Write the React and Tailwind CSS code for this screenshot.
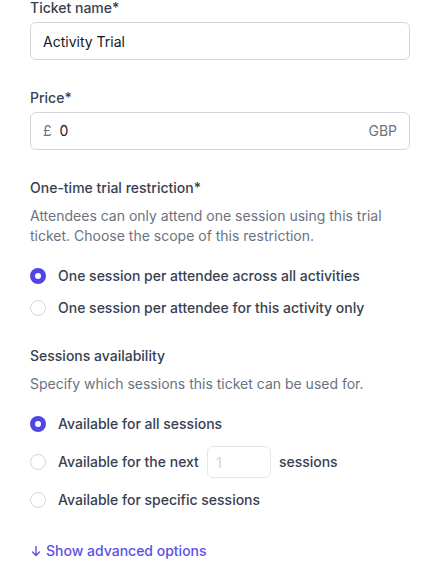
import React, { useState } from "react";

const Radio = ({ checked, onClick }) => (
  <button
    type="button"
    onClick={onClick}
    className={
      checked
        ? "flex h-4 w-4 shrink-0 items-center justify-center rounded-full bg-[#4f46e5]"
        : "flex h-4 w-4 shrink-0 items-center justify-center rounded-full border border-[#d1d5db] bg-white"
    }
  >
    {checked && <span className="h-1.5 w-1.5 rounded-full bg-white" />}
  </button>
);

const App = () => {
  const [details, setDetails] = useState({
    ticketName: "Activity Trial",
    price: "0",
    restriction: "all",
    availability: "all",
    nextSessions: "",
  });

  const handleChange = (e) => {
    setDetails({ ...details, [e.target.name]: e.target.value });
  };

  return (
    <div className="min-h-screen bg-white font-['Inter',sans-serif] text-sm text-[#374151]">
      <div className="-mt-0.5 w-[380px] pl-[30px] box-content">
        <label htmlFor="ticketName" className="block leading-5 font-medium">
          Ticket name*
        </label>
        <input
          type="text"
          name="ticketName"
          value={details.ticketName}
          onChange={handleChange}
          className="mt-1 block h-[38px] w-full rounded-md border border-[#d1d5db] px-[12px] text-sm text-[#111827] outline-none"
        />

        <label htmlFor="price" className="mt-7 block leading-5 font-medium">
          Price*
        </label>
        <div className="mt-1 flex h-[38px] w-full items-center rounded-md border border-[#d1d5db] px-[12px]">
          <span className="text-[#6b7280]">£</span>
          <input
            type="text"
            name="price"
            value={details.price}
            onChange={handleChange}
            className="ml-[8px] min-w-0 flex-1 text-sm text-[#111827] outline-none"
          />
          <span className="text-[#6b7280]">GBP</span>
        </div>

        <div className="mt-7 leading-5 font-medium">One-time trial restriction*</div>
        <p className="mt-2 leading-5 text-[#6b7280]">
          Attendees can only attend one session using this trial ticket. Choose
          the scope of this restriction.
        </p>
        <div className="mt-5 flex flex-col gap-3">
          <label className="flex h-5 items-center gap-3 font-medium">
            <Radio
              checked={details.restriction === "all"}
              onClick={() => setDetails({ ...details, restriction: "all" })}
            />
            One session per attendee across all activities
          </label>
          <label className="flex h-5 items-center gap-3 font-medium">
            <Radio
              checked={details.restriction === "this"}
              onClick={() => setDetails({ ...details, restriction: "this" })}
            />
            One session per attendee for this activity only
          </label>
        </div>

        <div className="mt-7 leading-5 font-medium">Sessions availability</div>
        <p className="mt-2 leading-5 text-[#6b7280]">
          Specify which sessions this ticket can be used for.
        </p>
        <div className="mt-5 flex flex-col gap-3">
          <label className="flex h-5 items-center gap-3 font-medium">
            <Radio
              checked={details.availability === "all"}
              onClick={() => setDetails({ ...details, availability: "all" })}
            />
            Available for all sessions
          </label>
          <label className="flex h-8 items-center font-medium">
            <Radio
              checked={details.availability === "next"}
              onClick={() => setDetails({ ...details, availability: "next" })}
            />
            <span className="ml-3">Available for the next</span>
            <input
              type="text"
              name="nextSessions"
              value={details.nextSessions}
              onChange={handleChange}
              placeholder="1"
              className="ml-2 h-8 w-16 rounded-md border border-[#e5e7eb] px-[8px] text-sm font-normal text-[#111827] placeholder-[#d1d5db] outline-none"
            />
            <span className="ml-2">sessions</span>
          </label>
          <label className="flex h-5 items-center gap-3 font-medium">
            <Radio
              checked={details.availability === "specific"}
              onClick={() => setDetails({ ...details, availability: "specific" })}
            />
            Available for specific sessions
          </label>
        </div>

        <button
          type="button"
          className="mt-[31px] flex h-5 items-center gap-1 font-medium text-[#5b50e6]"
        >
          <svg width="12" height="12" viewBox="0 0 12 12" fill="none" stroke="currentColor" strokeWidth="1.4" strokeLinecap="round" strokeLinejoin="round">
            <path d="M6 1.5v9M2.5 7 6 10.5 9.5 7" />
          </svg>
          Show advanced options
        </button>
      </div>
    </div>
  );
};

export default App;
